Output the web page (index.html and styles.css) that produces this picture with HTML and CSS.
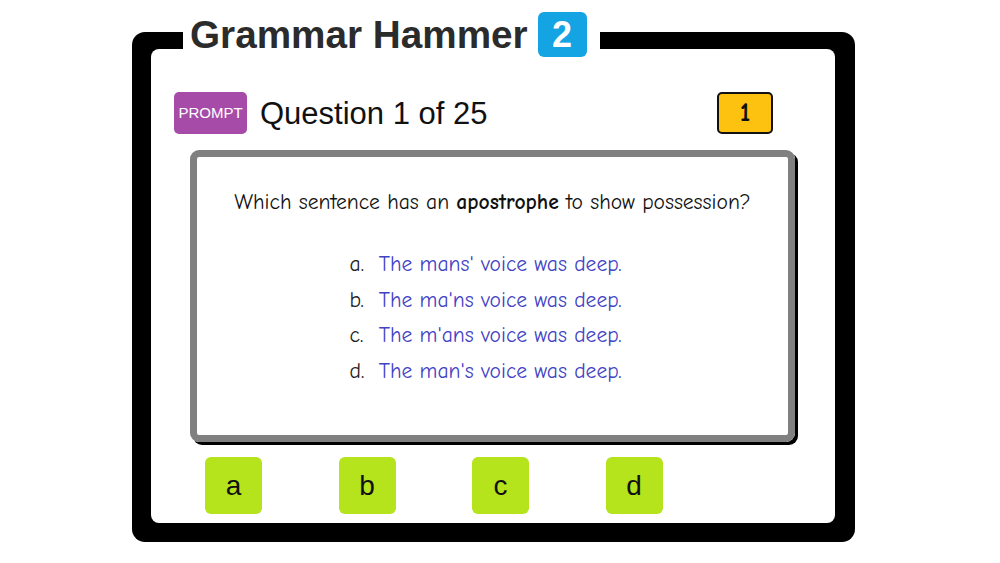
FILE: index.html
```html
<!DOCTYPE html>
<html>
<head>
<link rel="stylesheet" href="styles.css">
</head>
<body>

<div class="frame">
  <div class="title">
    <span class="title-text">Grammar Hammer</span>
    <span class="level">2</span>
  </div>

  <div class="inner">
    <div class="topbar">
      <div class="prompt">PROMPT</div>
      <div class="question-no">Question 1 of 25</div>
      <div class="score">1</div>
    </div>

    <div class="card">
      <p class="question">Which sentence has an <b>apostrophe</b> to show possession?</p>
      <ol class="options">
        <li><span class="letter">a.</span> The mans' voice was deep.</li>
        <li><span class="letter">b.</span> The ma'ns voice was deep.</li>
        <li><span class="letter">c.</span> The m'ans voice was deep.</li>
        <li><span class="letter">d.</span> The man's voice was deep.</li>
      </ol>
    </div>

    <div class="answers">
      <button class="answer">a</button>
      <button class="answer">b</button>
      <button class="answer">c</button>
      <button class="answer">d</button>
    </div>
  </div>
</div>

</body>
</html>
```

FILE: styles.css
```css
body {
  margin: 0;
  background-color: #fff;
  font-family: "Liberation Sans", Arial, sans-serif;
}

.frame {
  position: relative;
  box-sizing: border-box;
  width: 723px;
  height: 510px;
  margin: 32px 0 0 132px;
  padding: 17px 20px 19px 19px;
  background-color: #000;
  border-radius: 13px;
}

.title {
  position: absolute;
  top: -20px;
  left: 51px;
  height: 45px;
  display: flex;
  align-items: center;
  padding: 0 13px 0 7px;
  background-color: #fff;
}

.title-text {
  font-size: 38.7px;
  font-weight: bold;
  color: #2b2b2b;
}

.level {
  display: flex;
  align-items: center;
  justify-content: center;
  width: 49px;
  height: 45px;
  margin-left: 10px;
  background-color: #14a3e3;
  border-radius: 6px;
  color: #fff;
  font-size: 36px;
  font-weight: bold;
}

.inner {
  box-sizing: border-box;
  height: 100%;
  padding-top: 43px;
  background-color: #fff;
  border-radius: 8px;
}

.topbar {
  display: flex;
  align-items: center;
  height: 42px;
  margin: 0 62px 0 23px;
}

.prompt {
  width: 73px;
  height: 42px;
  line-height: 42px;
  text-align: center;
  background-color: #a64ca8;
  border-radius: 5px;
  color: #fff;
  font-size: 15px;
}

.question-no {
  margin-left: 13px;
  padding-top: 2px;
  font-size: 31px;
  color: #111;
}

.score {
  box-sizing: border-box;
  width: 56px;
  height: 42px;
  margin-left: auto;
  line-height: 37px;
  text-align: center;
  background-color: #fdc20f;
  border: 2.5px solid #111;
  border-radius: 5px;
  font-family: "Comic Sans MS", "Comic Neue", "Noto Sans", sans-serif;
  font-size: 27px;
  font-weight: 600;
  color: #111;
}

.card {
  box-sizing: border-box;
  height: 292px;
  margin: 16px 40px 0 39px;
  padding-top: 33px;
  border: 7px solid #808080;
  border-radius: 9px;
  box-shadow: 3px 3px 0 #000;
  font-family: "Comic Sans MS", "Comic Neue", "Noto Sans", sans-serif;
  font-size: 21.6px;
  text-align: center;
}

.question {
  margin: 0;
  color: #111;
}

.options {
  display: inline-block;
  list-style: none;
  margin: 33px 0 0 -14px;
  padding: 0;
  text-align: left;
  color: #4242c4;
}

.options li {
  height: 35.5px;
  line-height: 35.5px;
}

.letter {
  display: inline-block;
  width: 22px;
  color: #222;
}

.answers {
  display: flex;
  gap: 76.5px;
  margin: 15px 0 0 54px;
}

.answer {
  width: 57px;
  height: 57px;
  padding: 0;
  border: none;
  border-radius: 6px;
  background-color: #b5e31c;
  font-family: "Liberation Sans", Arial, sans-serif;
  font-size: 28px;
  color: #111;
}
```
